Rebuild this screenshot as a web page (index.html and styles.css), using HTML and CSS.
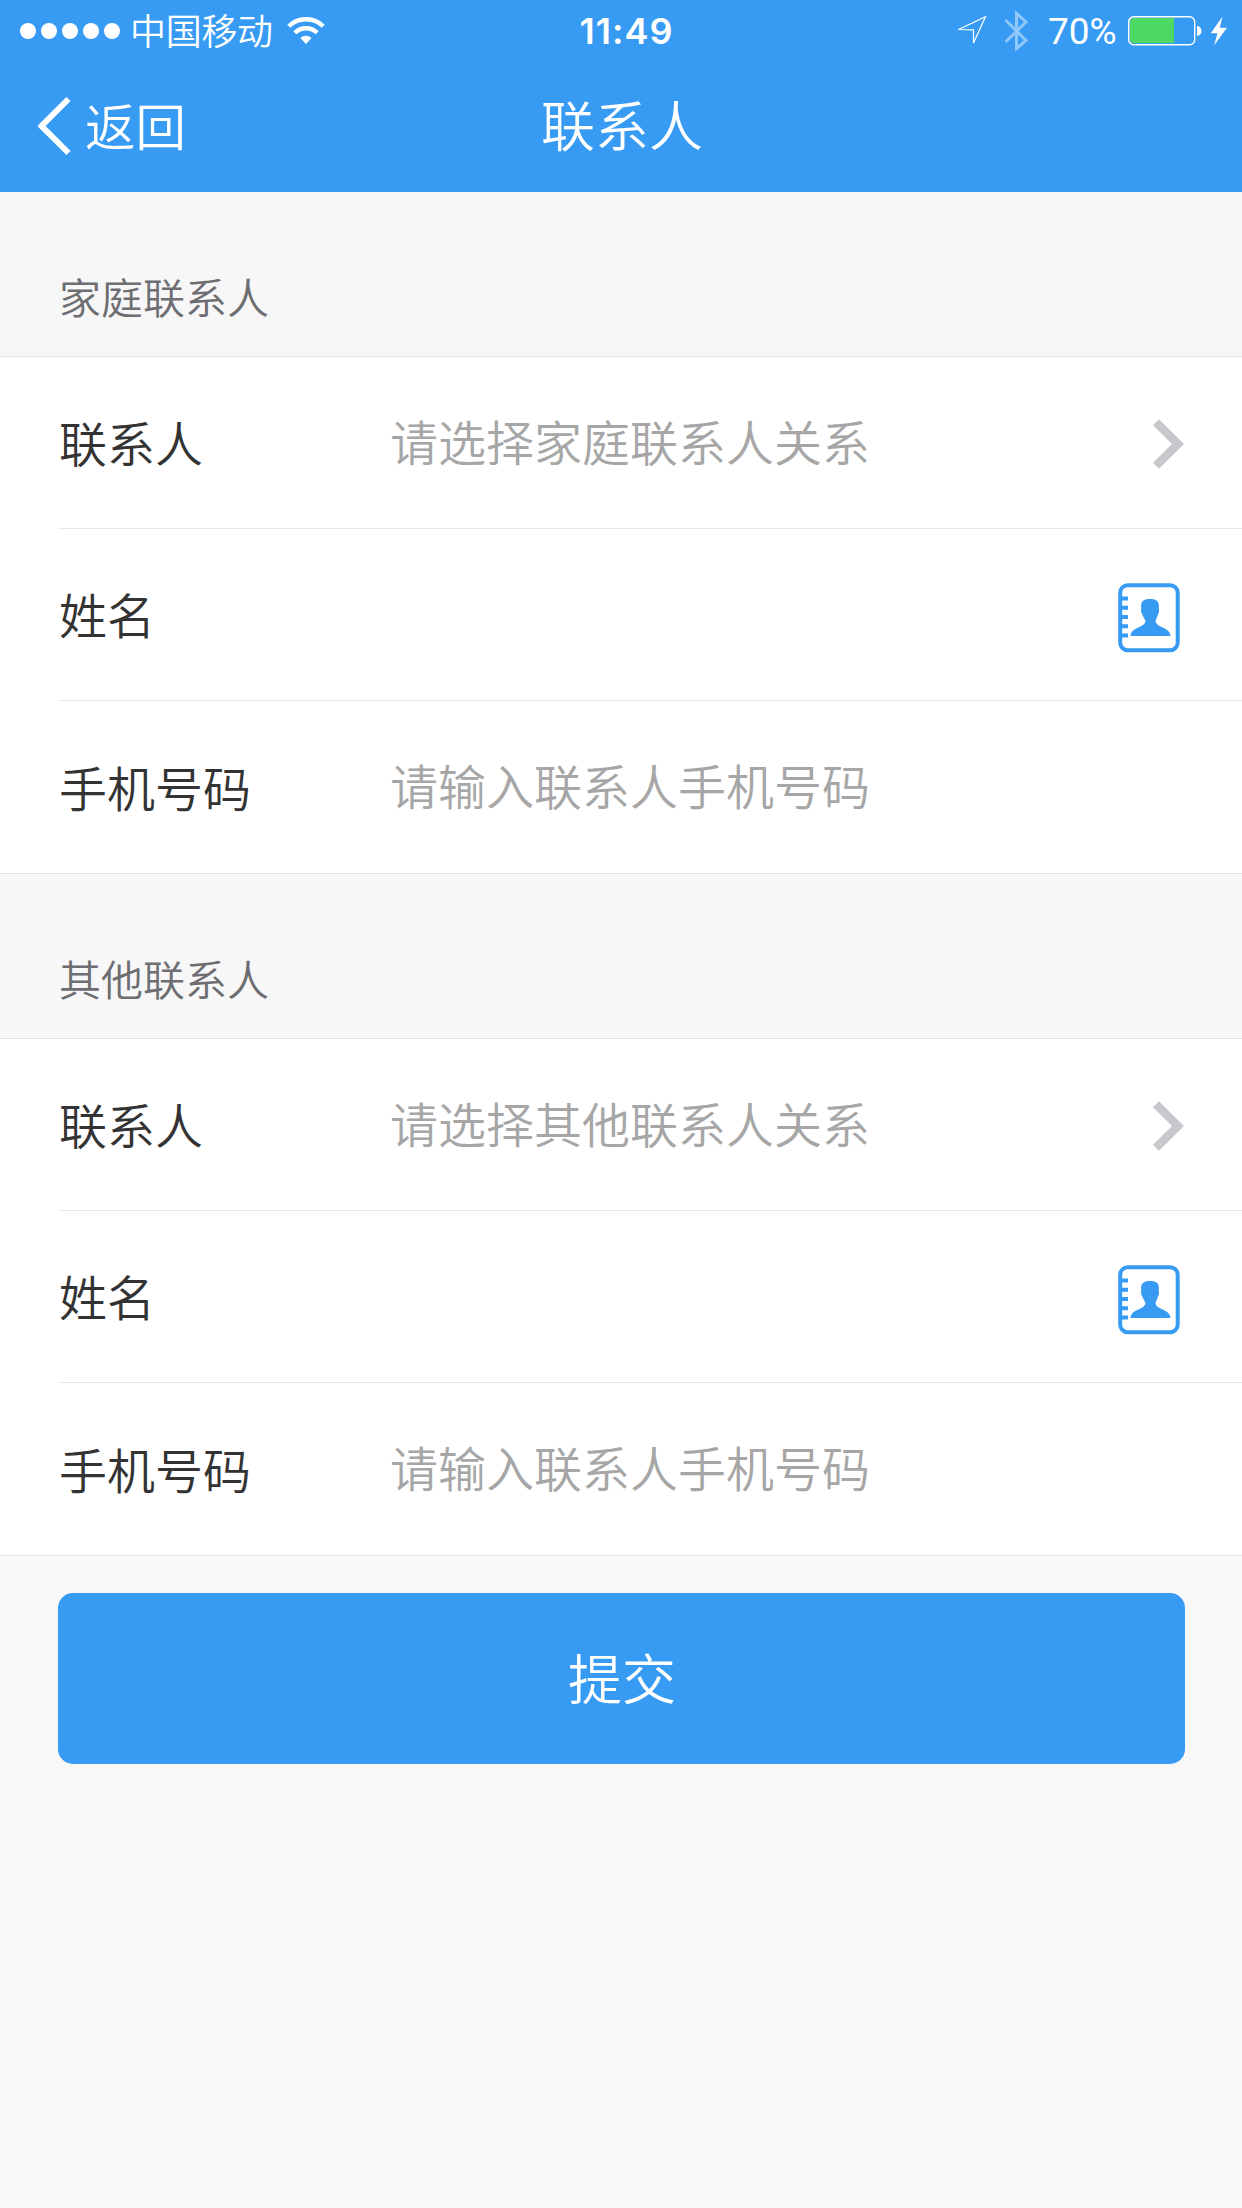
FILE: index.html
```html
<!DOCTYPE html>
<html lang="zh-CN">
<head>
<meta charset="utf-8">
<title>联系人</title>
<link rel="stylesheet" href="styles.css">
</head>
<body>
<header class="header">
  <div class="status">
    <div class="status-left">
      <div class="signal"><i></i><i></i><i></i><i></i><i></i></div>
      <span class="carrier">中国移动</span>
      <svg class="wifi" width="38" height="28" viewBox="0 0 38 28"><g fill="none" stroke="#fff" stroke-width="4.4"><path d="M1.8 9.2a24.6 24.6 0 0 1 34.4 0"/><path d="M7.8 15.8a16 16 0 0 1 22.4 0"/></g><path d="M19 27l-5.6-6a8.2 8.2 0 0 1 11.2 0z" fill="#fff"/></svg>
    </div>
    <span class="time">11:49</span>
    <div class="status-right">
      <svg width="32" height="32" viewBox="0 0 32 32"><path d="M2.500 14.500L29.500 1.800L17.500 28V14.800z" fill="none" stroke="#fff" stroke-width="1.200"/></svg>
      <svg class="bluetooth" width="26" height="42" viewBox="0 0 26 42"><path d="M1.500 10L22 30.500L12.500 38.500V3.500L22 12L1.500 32" fill="none" stroke="#8fc7fb" stroke-width="3"/></svg>
      <span class="percent">70%</span>
      <svg class="battery" width="74" height="30" viewBox="0 0 74 30"><rect x=".7" y=".7" width="66" height="28" rx="5" fill="none" stroke="#fff" stroke-width="1.400"/><path d="M6 2H46V27H6a4 4 0 0 1-4-4V6a4 4 0 0 1 4-4z" fill="#4cd964"/><path d="M69 10a4.500 5 0 0 1 0 10z" fill="#fff"/></svg>
      <svg class="bolt" width="18" height="30" viewBox="0 0 18 30"><path d="M12.500.5L.8 17.300H7.500L4 29.500L17 11.800H9.800z" fill="#fff"/></svg>
    </div>
  </div>
  <nav class="nav">
    <a class="back"><svg width="33" height="60" viewBox="0 0 33 60"><path d="M30.500 3L3.500 30L30.500 57" fill="none" stroke="#fff" stroke-width="6"/></svg><span>返回</span></a>
    <h1 class="title">联系人</h1>
  </nav>
</header>
<main>
  <section>
    <h2 class="group-title">家庭联系人</h2>
    <div class="group">
      <div class="row"><span class="label">联系人</span><span class="value">请选择家庭联系人关系</span><svg class="chevron" width="31" height="50" viewBox="0 0 31 50"><path d="M3 3.300L25 25L3 46.700" fill="none" stroke="#c7c7cc" stroke-width="8.500"/></svg></div>
      <div class="row"><span class="label">姓名</span><span class="value"></span><svg class="book" width="62" height="70" viewBox="0 0 62 70"><rect x="2.200" y="2.200" width="57.500" height="65" rx="7.500" fill="none" stroke="#379bf4" stroke-width="4"/><path d="M1 15.500h9M1 24.700h9M1 34h9M1 43.200h9M1 52.400h9" stroke="#379bf4" stroke-width="4"/><path d="M23.200 25C22.700 18.500 25 16 32 16S41.300 18.500 40.800 25C41.300 28 41 30 40.200 31C39.500 34 37.800 36 37.500 38.500C39 45 52 44 52.500 53H12.500C13 44 26 45 27.500 38.500C27 36 25 34 24.200 31C23.200 30 22.800 28 23.200 25Z" fill="#379bf4"/></svg></div>
      <div class="row"><span class="label">手机号码</span><span class="value">请输入联系人手机号码</span></div>
    </div>
  </section>
  <section>
    <h2 class="group-title">其他联系人</h2>
    <div class="group">
      <div class="row"><span class="label">联系人</span><span class="value">请选择其他联系人关系</span><svg class="chevron" width="31" height="50" viewBox="0 0 31 50"><path d="M3 3.300L25 25L3 46.700" fill="none" stroke="#c7c7cc" stroke-width="8.500"/></svg></div>
      <div class="row"><span class="label">姓名</span><span class="value"></span><svg class="book" width="62" height="70" viewBox="0 0 62 70"><rect x="2.200" y="2.200" width="57.500" height="65" rx="7.500" fill="none" stroke="#379bf4" stroke-width="4"/><path d="M1 15.500h9M1 24.700h9M1 34h9M1 43.200h9M1 52.400h9" stroke="#379bf4" stroke-width="4"/><path d="M23.200 25C22.700 18.500 25 16 32 16S41.300 18.500 40.800 25C41.300 28 41 30 40.200 31C39.500 34 37.800 36 37.500 38.500C39 45 52 44 52.500 53H12.500C13 44 26 45 27.500 38.500C27 36 25 34 24.200 31C23.200 30 22.800 28 23.200 25Z" fill="#379bf4"/></svg></div>
      <div class="row"><span class="label">手机号码</span><span class="value">请输入联系人手机号码</span></div>
    </div>
  </section>
  <button class="submit">提交</button>
</main>
</body>
</html>
```
FILE: styles.css
```css
* { box-sizing: border-box; }
body {
  margin: 0;
  min-height: 2208px;
  background: #f8f8f8;
  font-family: "Noto Sans CJK SC", sans-serif;
  font-weight: 350;
  color: #333;
}
svg { display: block; flex: none; }
.header { height: 192px; background: #379bf4; color: #fff; }
.status {
  height: 60px;
  padding: 0 14px 0 20px;
  display: grid;
  grid-template-columns: 1fr auto 1fr;
  align-items: center;
}
.status-left, .status-right { display: flex; align-items: center; height: 60px; }
.status-right { justify-content: flex-end; }
.signal { display: flex; gap: 5px; }
.signal i { width: 16px; height: 16px; border-radius: 50%; background: #fff; }
.carrier { margin-left: 10px; font-size: 36px; line-height: 58px; letter-spacing: -.3px; padding-bottom: 3px; }
.wifi { margin-left: 14px; }
.time { font: 600 36px/60px Inter, sans-serif; letter-spacing: 1px; padding: 1px 0 0 5px; }
.percent { font: 400 37px/60px Roboto, sans-serif; padding-top: 2px; margin-left: 18px; width: 70px; white-space: nowrap; }
.bluetooth { margin-left: 16px; }
.battery { margin-left: 10px; }
.bolt { margin-left: 8px; }
.nav {
  height: 132px;
  padding: 0 36px 0 38px;
  display: grid;
  grid-template-columns: 1fr auto 1fr;
  align-items: center;
}
.back { display: flex; align-items: center; gap: 14px; font-size: 50.500px; }
.back span { padding-bottom: 5px; }
.back, .title { height: 132px; }
.back span, .title { line-height: 128px; }
.title { margin: 0; font-size: 54px; font-weight: 350; }
.group-title {
  margin: 0;
  height: 164px;
  padding: 74px 59px 0;
  background: #f7f7f7;
  font-size: 42px;
  line-height: 60px;
  font-weight: 350;
  color: #6d6d72;
}
.group { background: #fff; border-top: 1px solid #e4e4e5; border-bottom: 1px solid #e4e4e5; }
.row {
  height: 172px;
  margin-left: 58px;
  padding-right: 58px;
  display: flex;
  align-items: center;
  border-bottom: 1px solid #e8e8e8;
}
.row:last-child { border-bottom: 0; }
.label { width: 332px; font-size: 48px; line-height: 72px; padding: 0 0 3px 1px; }
.value { flex: 1; font-size: 48px; line-height: 72px; color: #a6a6a6; padding-bottom: 6px; }
.book { margin-right: 4px; margin-top: 6px; }
.chevron { margin-top: 2px; }
.submit {
  display: block;
  width: 1127px;
  height: 171px;
  margin: 37px 0 0 58px;
  padding: 0 0 4px 1px;
  border: 0;
  border-radius: 15px;
  background: #379bf4;
  color: #fff;
  font: 350 54px/167px "Noto Sans CJK SC", sans-serif;
}
```
